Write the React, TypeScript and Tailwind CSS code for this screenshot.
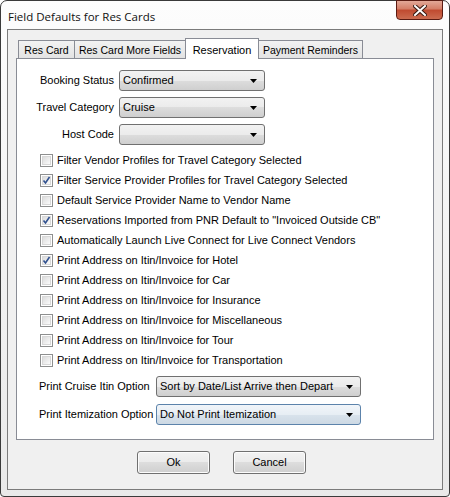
import React from "react";

const font = { fontFamily: '"Liberation Sans", Arial, sans-serif' };

function Select({ value, width, focused }: { value: string; width: string; focused?: boolean }) {
  return (
    <div
      className={`${width} h-[21px] flex items-center justify-between rounded-[3px] border pl-[3px] pr-[7px] text-[11px] text-black ${
        focused
          ? "border-[#5c83ab] bg-[linear-gradient(#f1f5f9_0%,#e7eef4_50%,#d9e3ec_50%,#cdd9e4_100%)]"
          : "border-[#707070] bg-[linear-gradient(#f2f2f2_0%,#ebebeb_50%,#dddddd_50%,#cfcfcf_100%)]"
      }`}
    >
      <span>{value}</span>
      <svg width="7" height="4" viewBox="0 0 7 4">
        <path d="M0 0 H7 L3.5 4 Z" fill="#000" />
      </svg>
    </div>
  );
}

function Checkbox({ checked, label }: { checked?: boolean; label: string }) {
  return (
    <div className="flex items-center h-[20px] gap-[4px]">
      <div className="w-[13px] h-[13px] border border-[#8e8f8f] bg-white p-[1px]">
        <div className="w-full h-full border border-[#d8d8d8] bg-[linear-gradient(135deg,#dcdcdc,#fbfbfb)] relative">
          {checked && (
            <svg className="absolute left-[-1px] top-[-1px]" width="9" height="9" viewBox="0 0 9 9">
              <path d="M1.5 4.5 L3.5 7 L7.5 1" stroke="#31518f" strokeWidth="1.6" fill="none" />
            </svg>
          )}
        </div>
      </div>
      <span className="text-[11px] text-black">{label}</span>
    </div>
  );
}

function Tab({ label, width, active }: { label: string; width: string; active?: boolean }) {
  if (active) {
    return (
      <div className={`${width} h-[21px] -mb-[1px] -mr-[1px] border border-b-0 border-[#898c95] bg-white flex justify-center pt-[3px] text-[11px] z-10`}>
        {label}
      </div>
    );
  }
  return (
    <div className={`${width} h-[18px] -mr-[1px] border border-b-0 border-[#898c95] bg-[linear-gradient(#f2f2f2,#e3e3e3)] flex items-center justify-center pt-[2px] text-[10.5px]`}>
      {label}
    </div>
  );
}

function Button({ label }: { label: string }) {
  return (
    <div className="w-[73px] h-[23px] rounded-[3px] border border-[#707070] bg-[linear-gradient(#f2f2f2_0%,#ebebeb_50%,#dddddd_50%,#cfcfcf_100%)] shadow-[inset_0_0_0_1px_#fcfcfc] flex items-center justify-center text-[11px]">
      {label}
    </div>
  );
}

export default function App() {
  const checks = [
    { label: "Filter Vendor Profiles for Travel Category Selected" },
    { label: "Filter Service Provider Profiles for Travel Category Selected", checked: true },
    { label: "Default Service Provider Name to Vendor Name" },
    { label: 'Reservations Imported from PNR Default to "Invoiced Outside CB"', checked: true },
    { label: "Automatically Launch Live Connect for Live Connect Vendors" },
    { label: "Print Address on Itin/Invoice for Hotel", checked: true },
    { label: "Print Address on Itin/Invoice for Car" },
    { label: "Print Address on Itin/Invoice for Insurance" },
    { label: "Print Address on Itin/Invoice for Miscellaneous" },
    { label: "Print Address on Itin/Invoice for Tour" },
    { label: "Print Address on Itin/Invoice for Transportation" },
  ];

  return (
    <div style={font} className="w-[450px] h-[497px] bg-white">
      <div className="w-[450px] h-[497px] rounded-t-[7px] rounded-b-[4px] border border-[#3a3a3a] bg-[linear-gradient(#fdfdfd,#e9e9e9)] flex flex-col">
        {/* title bar */}
        <div className="h-[28px] flex items-start justify-between pl-[7px] pr-[6px]">
          <span className="mt-[7px] text-[11.5px] text-[#111]" style={{ fontFamily: '"Open Sans", "Noto Sans", sans-serif' }}>
            Field Defaults for Res Cards
          </span>
          <div className="w-[47px] h-[20px] -mt-[1px] rounded-b-[4px] border border-[#5a1b12] bg-[linear-gradient(#e3a898_0%,#d47d66_45%,#c04a30_50%,#cc6c50_100%)] flex items-center justify-center">
            <svg width="14" height="11" viewBox="0 0 14 11">
              <path d="M2 1 L12 10 M12 1 L2 10" stroke="#3a1a12" strokeWidth="4" strokeLinecap="square" />
              <path d="M2 1 L12 10 M12 1 L2 10" stroke="#ffffff" strokeWidth="2" strokeLinecap="square" />
            </svg>
          </div>
        </div>

        {/* client area */}
        <div className="flex-1 mx-[6px] mb-[6px] border border-[#7b7b7b] bg-[#f0f0f0] flex flex-col">
          <div className="flex items-end pl-[10px] mt-[8px] h-[20px]">
            <Tab label="Res Card" width="w-[57px]" />
            <Tab label="Res Card More Fields" width="w-[112px]" />
            <Tab label="Reservation" width="w-[74px]" active />
            <Tab label="Payment Reminders" width="w-[105px]" />
          </div>
          <div className="ml-[8px] mr-[8px] h-[382px] border border-[#898c95] bg-white pt-[11px]">
            <div className="flex flex-col gap-[6px]">
              {[
                ["Booking Status", "Confirmed"],
                ["Travel Category", "Cruise"],
                ["Host Code", ""],
              ].map(([l, v]) => (
                <div key={l} className="flex items-center">
                  <div className="w-[102px] text-right text-[11px] pr-[5px]">{l}</div>
                  <Select value={v} width="w-[146px]" />
                </div>
              ))}
            </div>
            <div className="mt-[5px] pl-[23px] flex flex-col">
              {checks.map((c) => (
                <Checkbox key={c.label} label={c.label} checked={c.checked} />
              ))}
            </div>
            <div className="mt-[6px] pl-[22px] flex flex-col gap-[7px]">
              <div className="flex items-center">
                <div className="w-[117px] text-[11px]">Print Cruise Itin Option</div>
                <Select value="Sort by Date/List Arrive then Depart" width="w-[205px]" />
              </div>
              <div className="flex items-center">
                <div className="w-[117px] text-[11px]">Print Itemization Option</div>
                <Select value="Do Not Print Itemization" width="w-[205px]" focused />
              </div>
            </div>
          </div>
          <div className="flex justify-center gap-[23px] mt-[11px] pr-[7px]">
            <Button label="Ok" />
            <Button label="Cancel" />
          </div>
        </div>
      </div>
    </div>
  );
}
